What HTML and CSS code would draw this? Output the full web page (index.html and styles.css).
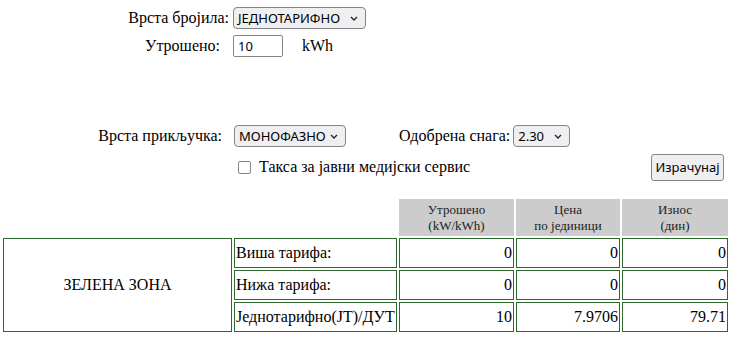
FILE: index.html
```html
<!DOCTYPE html>
<html lang="sr">
<head>
<meta charset="utf-8">
<title>Обрачун</title>
<link rel="stylesheet" href="styles.css">
</head>
<body>
<section class="meter">
  <div class="field">
    <label class="lbl lbl-meter">Врста бројила:</label>
    <span class="sel sel-meter"><span class="sel-text">ЈЕДНОТАРИФНО</span><svg class="chev" viewBox="0 0 8 5" width="8" height="5"><path d="M1 1 L4 4 L7 1" fill="none" stroke="#222" stroke-width="1.3"/></svg></span>
  </div>
  <div class="field field-used">
    <label class="lbl lbl-used">Утрошено:</label>
    <span class="inp">10</span>
    <span class="unit">kWh</span>
  </div>
</section>

<section class="conn">
  <div class="conn-row">
    <label class="lbl lbl-conn">Врста прикључка:</label>
    <span class="sel sel-phase"><span class="sel-text">МОНОФАЗНО</span><svg class="chev" viewBox="0 0 8 5" width="8" height="5"><path d="M1 1 L4 4 L7 1" fill="none" stroke="#222" stroke-width="1.3"/></svg></span>
    <label class="lbl lbl-power">Одобрена снага:</label>
    <span class="sel sel-power"><span class="sel-text">2.30</span><svg class="chev" viewBox="0 0 8 5" width="8" height="5"><path d="M1 1 L4 4 L7 1" fill="none" stroke="#222" stroke-width="1.3"/></svg></span>
  </div>
  <div class="conn-row2">
    <span class="check"></span>
    <span class="check-text">Такса за јавни медијски сервис</span>
    <span class="btn">Израчунај</span>
  </div>
</section>

<table class="calc">
  <colgroup>
    <col class="c1"><col class="c2"><col class="c3"><col class="c4"><col class="c5">
  </colgroup>
  <tr class="head">
    <td class="blank"></td>
    <td class="blank"></td>
    <th>Утрошено<br>(kW/kWh)</th>
    <th>Цена<br>по јединици</th>
    <th>Износ<br>(дин)</th>
  </tr>
  <tr>
    <td class="zone" rowspan="3">ЗЕЛЕНА ЗОНА</td>
    <td class="name">Виша тарифа:</td>
    <td class="num">0</td>
    <td class="num">0</td>
    <td class="num">0</td>
  </tr>
  <tr>
    <td class="name">Нижа тарифа:</td>
    <td class="num">0</td>
    <td class="num">0</td>
    <td class="num">0</td>
  </tr>
  <tr>
    <td class="name">Једнотарифно(ЈТ)/ДУТ</td>
    <td class="num">10</td>
    <td class="num">7.9706</td>
    <td class="num">79.71</td>
  </tr>
</table>
</body>
</html>
```

FILE: styles.css
```css
html, body {
  margin: 0;
  padding: 0;
  background: #fff;
}
body {
  font-family: "Liberation Serif", "Times New Roman", serif;
  font-size: 16px;
  color: #000;
  width: 732px;
  height: 338px;
  overflow: hidden;
}

.lbl {
  display: inline-block;
  text-align: right;
}

.meter {
  padding-top: 7px;
}
.field {
  display: flex;
  align-items: center;
  height: 22px;
}
.field-used {
  margin-top: 6px;
}
.lbl-meter {
  width: 229px;
  margin-right: 4px;
}
.lbl-used {
  width: 220px;
  margin-right: 13px;
}

.sel {
  position: relative;
  display: inline-flex;
  align-items: center;
  box-sizing: border-box;
  height: 22px;
  border: 1px solid #858585;
  border-radius: 4px;
  background: #efeff2;
  font-family: "Noto Sans", "Open Sans", sans-serif;
  font-size: 13px;
  color: #000;
  padding-left: 4px;
}
.sel .chev {
  position: absolute;
  right: 7px;
  top: 8px;
}
.sel-meter { width: 133px; }
.sel-phase { width: 112px; }
.sel-power { width: 57px; }

.inp {
  display: inline-flex;
  align-items: center;
  box-sizing: border-box;
  width: 50px;
  height: 22px;
  border: 1px solid #858585;
  border-radius: 2px;
  padding-left: 4px;
  font-family: "Noto Sans", "Open Sans", sans-serif;
  font-size: 13px;
}
.unit {
  margin-left: 19px;
}

.conn {
  margin-top: 67px;
}
.conn-row {
  display: flex;
  align-items: center;
  height: 23px;
}
.lbl-conn {
  width: 222px;
  margin-right: 12px;
}
.lbl-power {
  margin-left: 53px;
  margin-right: 3px;
}
.conn-row2 {
  display: flex;
  align-items: center;
  height: 28px;
  margin-top: 6px;
}
.check {
  box-sizing: border-box;
  width: 13px;
  height: 13px;
  border: 1px solid #858585;
  border-radius: 2px;
  margin-left: 238px;
  margin-top: 1px;
}
.check-text {
  margin-left: 8px;
}
.btn {
  display: inline-flex;
  align-items: center;
  justify-content: center;
  box-sizing: border-box;
  width: 73px;
  height: 27px;
  margin-left: auto;
  margin-right: 8px;
  border: 1px solid #858585;
  border-radius: 3px;
  background: #efeff2;
  font-family: "Noto Sans", "Open Sans", sans-serif;
  font-size: 13px;
}

.calc {
  margin-top: 16px;
  margin-left: 1px;
  border-collapse: separate;
  border-spacing: 2px;
  table-layout: fixed;
  width: 727px;
}
.c1 { width: 229px; }
.c2 { width: 163px; }
.c3 { width: 115px; }
.c4 { width: 104px; }
.c5 { width: 106px; }

.calc th {
  background: #cccccc;
  font-weight: normal;
  font-size: 13px;
  line-height: 16px;
  height: 37px;
  padding: 0;
  color: #222;
  box-sizing: border-box;
}
.calc td {
  box-sizing: border-box;
  border: 1px solid #2b6a2b;
  height: 30px;
  padding: 0 1px;
}
.calc td.blank {
  border: none;
}
.zone {
  text-align: center;
}
.num {
  text-align: right;
}
.name {
  text-align: left;
}
```
